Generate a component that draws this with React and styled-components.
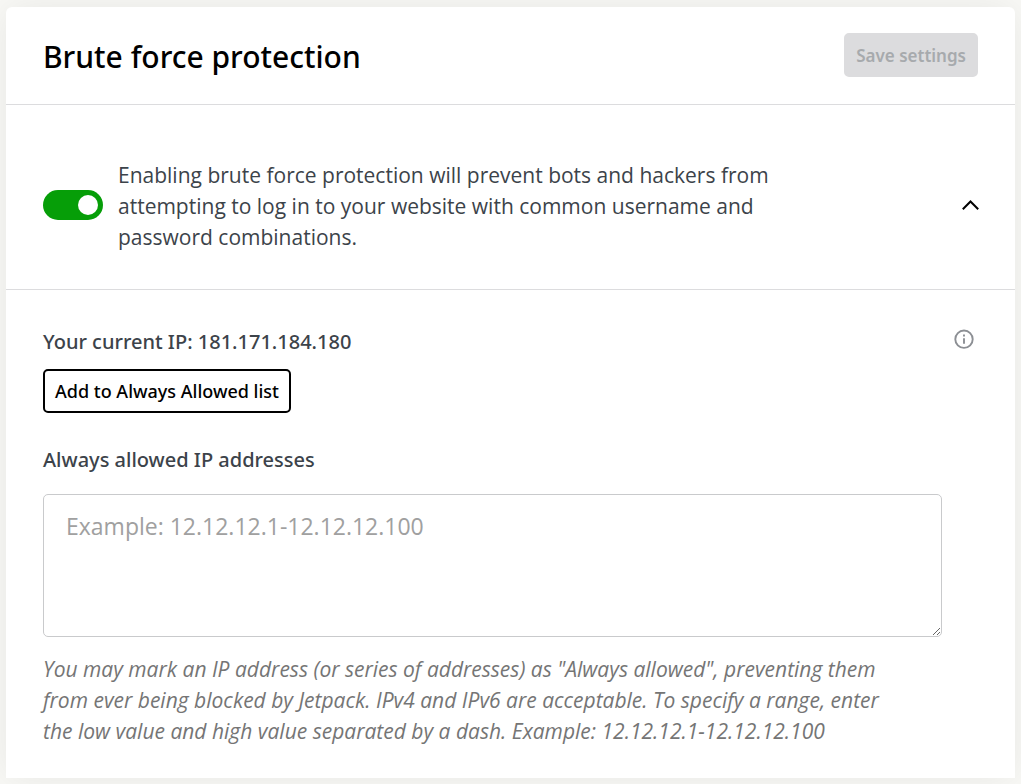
import React, { useState } from "react";
import styled, { createGlobalStyle } from "styled-components";

const GlobalStyle = createGlobalStyle`
  * {
    box-sizing: border-box;
  }

  body {
    margin: 0;
    background-color: #f9f9f6;
    font-family: "Open Sans", "Noto Sans", sans-serif;
    color: #3c434a;
  }
`;

const Page = styled.main`
  padding: 7px 6px 6px;
`;

const Card = styled.section`
  background-color: #ffffff;
  border-radius: 6px 6px 0 0;
  box-shadow: 0 0 40px rgba(0, 0, 0, 0.08);
`;

const Header = styled.header`
  display: flex;
  align-items: center;
  justify-content: space-between;
  padding: 26px 37px 27px;
  border-bottom: 1px solid #dcdcde;
`;

const Title = styled.h1`
  margin: 0;
  padding-top: 4px;
  font-family: "Noto Sans", "Open Sans", sans-serif;
  font-size: 30px;
  font-weight: 500;
  line-height: 40px;
  color: #000000;
`;

const Button = styled.button`
  height: 44px;
  padding: 0 10px;
  border: 2px solid ${(props) => (props.$outlined ? "#000000" : "#dcdcde")};
  border-radius: 5px;
  background-color: ${(props) => (props.$outlined ? "#ffffff" : "#dcdcde")};
  font-family: "Noto Sans", "Open Sans", sans-serif;
  font-size: ${(props) => (props.$outlined ? "18px" : "17px")};
  font-weight: ${(props) => (props.$outlined ? 500 : 600)};
  color: ${(props) => (props.$outlined ? "#000000" : "#a7aaad")};
  white-space: nowrap;
`;

const ToggleRow = styled.div`
  display: flex;
  align-items: center;
  gap: 15px;
  padding: 52px 36px 36px 37px;
  border-bottom: 1px solid #dcdcde;
`;

const Toggle = styled.input`
  appearance: none;
  display: flex;
  flex-shrink: 0;
  justify-content: ${(props) => (props.checked ? "flex-end" : "flex-start")};
  width: 60px;
  height: 30px;
  margin: 0;
  padding: 5px;
  border-radius: 15px;
  background-color: ${(props) => (props.checked ? "#069e08" : "#a7aaad")};
  cursor: pointer;

  &::before {
    content: "";
    width: 20px;
    height: 20px;
    border-radius: 50%;
    background-color: #ffffff;
  }
`;

const Description = styled.label`
  flex: 1;
  max-width: 680px;
  padding-top: 3px;
  font-size: 21px;
  line-height: 31px;
`;

const IconButton = styled.button`
  display: flex;
  flex-shrink: 0;
  margin-left: auto;
  padding: 0;
  border: none;
  background: none;
  color: ${(props) => props.$color};
  cursor: pointer;
`;

const Settings = styled.div`
  display: flex;
  align-items: flex-start;
  gap: 12px;
  padding: 37px 41px 31px 37px;
`;

const Fields = styled.div`
  display: flex;
  flex: 1;
  flex-direction: column;
  align-items: flex-start;
`;

const CurrentIp = styled.p`
  margin: 0 0 12px;
  font-family: "Noto Sans", "Open Sans", sans-serif;
  font-size: 20px;
  font-weight: 500;
  line-height: 30px;
`;

const FieldLabel = styled.label`
  margin: 32px 0 19px;
  font-family: "Noto Sans", "Open Sans", sans-serif;
  font-size: 20px;
  font-weight: 500;
  line-height: 30px;
`;

const TextArea = styled.textarea`
  width: 100%;
  height: 143px;
  padding: 14px 22px;
  border: 1px solid #c9cacc;
  border-radius: 5px;
  font-family: inherit;
  font-size: 23px;
  line-height: 34px;
  color: #2c3338;
  resize: vertical;

  &::placeholder {
    color: #a0a0a0;
  }
`;

const HelpText = styled.p`
  max-width: 860px;
  margin: 17px 0 0;
  font-size: 21px;
  font-style: italic;
  line-height: 31px;
  color: #757575;
`;

function App() {
  const [enabled, setEnabled] = useState(true);
  const [open, setOpen] = useState(true);
  const [addresses, setAddresses] = useState("");

  return (
    <>
      <GlobalStyle />
      <Page>
        <Card>
          <Header>
            <Title>Brute force protection</Title>
            <Button type="button" disabled>Save settings</Button>
          </Header>

          <ToggleRow>
            <Toggle
              type="checkbox"
              id="brute-force"
              checked={enabled}
              onChange={() => setEnabled(!enabled)}
            />
            <Description htmlFor="brute-force">
              Enabling brute force protection will prevent bots and hackers from
              attempting to log in to your website with common username and
              password combinations.
            </Description>
            <IconButton
              type="button"
              $color="#000000"
              aria-label="Toggle details"
              aria-expanded={open}
              onClick={() => setOpen(!open)}
            >
              <svg width="18" height="18" viewBox="0 0 18 18" fill="none" stroke="currentColor" strokeWidth="2">
                <path d={open ? "M1.8 13.3 9.5 5.5l7.7 7.8" : "M1.8 5.5 9.5 13.3 17.2 5.5"} />
              </svg>
            </IconButton>
          </ToggleRow>

          {open && (
            <Settings>
              <Fields>
                <CurrentIp>Your current IP: 181.171.184.180</CurrentIp>
                <Button type="button" $outlined>Add to Always Allowed list</Button>
                <FieldLabel htmlFor="allowed-ips">Always allowed IP addresses</FieldLabel>
                <TextArea
                  id="allowed-ips"
                  placeholder="Example: 12.12.12.1-12.12.12.100"
                  value={addresses}
                  onChange={(e) => setAddresses(e.target.value)}
                />
                <HelpText>
                  You may mark an IP address (or series of addresses) as "Always allowed", preventing them
                  from ever being blocked by Jetpack. IPv4 and IPv6 are acceptable. To specify a range, enter
                  the low value and high value separated by a dash. Example: 12.12.12.1-12.12.12.100
                </HelpText>
              </Fields>
              <IconButton type="button" $color="#8c8f94" aria-label="More information">
                <svg width="20" height="24" viewBox="0 0 20 24" fill="none" stroke="currentColor">
                  <circle cx="10" cy="12.2" r="8.7" strokeWidth="1.9" />
                  <path d="M10 11.2v5.5M10 7.5v2" strokeWidth="1.9" />
                </svg>
              </IconButton>
            </Settings>
          )}
        </Card>
      </Page>
    </>
  );
}

export default App;
